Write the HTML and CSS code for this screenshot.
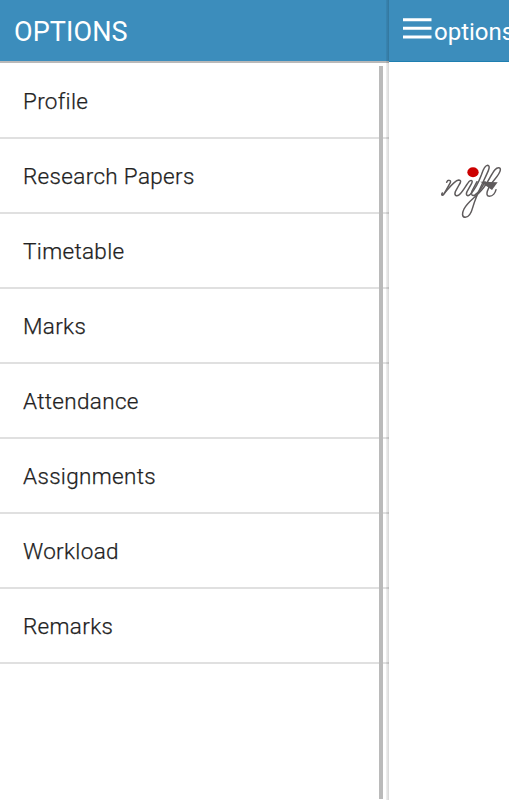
FILE: index.html
```html
<!DOCTYPE html>
<html lang="en">
<head>
  <meta charset="UTF-8">
  <meta name="viewport" content="width=device-width, initial-scale=1.0">
  <title>Options</title>
  <link rel="stylesheet" href="styles.css">
</head>
<body>
  <div class="app">
    <nav class="drawer">
      <h1 class="drawer-header">OPTIONS</h1>
      <ul class="menu">
        <li>Profile</li>
        <li>Research Papers</li>
        <li>Timetable</li>
        <li>Marks</li>
        <li>Attendance</li>
        <li>Assignments</li>
        <li>Workload</li>
        <li>Remarks</li>
      </ul>
      <div class="scrollbar"></div>
    </nav>
    <main class="page">
      <header class="page-header">
        <svg class="menu-icon" width="29" height="21" viewBox="0 0 29 21">
          <path d="M0 1.7h28.5M0 10.3h28.5M0 18.9h28.5" stroke="#fff" stroke-width="3"/>
        </svg>
        <span>options</span>
      </header>
      <svg class="logo" width="80" height="70" viewBox="0 0 240 210">
        <g fill="none" stroke="#5f5b5c" stroke-width="4.5" stroke-linecap="round" stroke-linejoin="round">
          <path d="M53 82C56 74 67 74 64 83L46 115C42 123 35 122 40 114"/>
          <path d="M46 115C57 103 75 77 89 75C98 75 95 83 90 90L79 110C75 121 82 126 91 119C103 109 113 86 122 78C128 74 132 78 128 85L114 110C109 121 116 126 124 118C137 104 148 84 157 60C162 45 168 31 176 31C184 32 180 44 174 56C158 91 140 125 132 155C127 174 120 187 109 187C98 187 99 174 105 162C117 139 139 128 158 105C178 83 185 59 198 44C205 36 215 36 214 45C213 56 201 68 190 82C177 97 166 124 181 124C192 124 199 113 201 104"/>
          <path d="M144 80L129 108C125 119 129 124 138 120C149 113 160 96 168 80"/>
        </g>
        <path fill="#5f5b5c" d="M154 80L206 82L189 105Z"/>
        <ellipse fill="#cc0000" cx="132" cy="52" rx="17" ry="15"/>
      </svg>
    </main>
  </div>
</body>
</html>
```
FILE: styles.css
```css
* {
  box-sizing: border-box;
}
body {
  margin: 0;
  font-family: Roboto, "Liberation Sans", sans-serif;
  background-color: #fff;
  overflow: hidden;
}
.app {
  display: flex;
  height: 800px;
  overflow: hidden;
}
.drawer {
  position: relative;
  flex: 0 0 389px;
}
.drawer::after {
  content: "";
  position: absolute;
  top: 0;
  right: 0;
  width: 3px;
  height: 100%;
  background: linear-gradient(to right, rgba(0, 0, 0, 0.05), rgba(0, 0, 0, 0.16));
}
.drawer-header {
  height: 63px;
  margin: 0;
  padding: 0 0 0 14px;
  background-color: #3c8dbc;
  border-bottom: 2px solid #b9b9b9;
  color: #fff;
  font-size: 27px;
  font-weight: 400;
  line-height: 64px;
  letter-spacing: 0.1px;
}
.menu {
  list-style: none;
  margin: 0;
  padding: 0;
}
.menu li {
  height: 75px;
  padding-left: 23px;
  border-bottom: 2px solid #e0e0e0;
  color: #222;
  font-size: 22.5px;
  font-weight: 300;
  -webkit-text-stroke: 0.25px #222;
  line-height: 74px;
  letter-spacing: 0.33px;
}
.menu li:first-child {
  height: 76px;
  line-height: 76px;
}
.scrollbar {
  position: absolute;
  top: 66px;
  right: 6px;
  width: 4px;
  height: 733px;
  background-color: #bababa;
}
.page {
  flex: 1;
  min-width: 0;
  overflow: hidden;
}
.page-header {
  display: flex;
  align-items: flex-start;
  height: 62px;
  padding: 18px 0 0 14px;
  background-color: #3c8dbc;
  border-bottom: 1px solid #1f7fb0;
  color: #fff;
  font-size: 24px;
  line-height: 28px;
}
.menu-icon {
  flex: none;
  margin-right: 2px;
}
.logo {
  display: block;
  margin: 93px 0 0 40px;
}
```
